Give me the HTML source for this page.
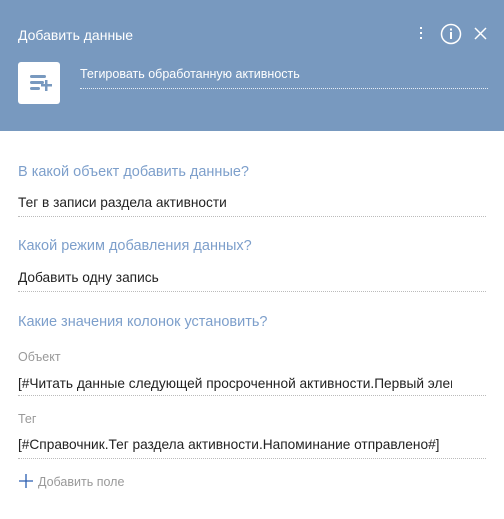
<!DOCTYPE html>
<html><head><meta charset="utf-8"><style>
*{margin:0;padding:0;box-sizing:border-box}
body{width:504px;height:519px;background:#fff;font-family:"Liberation Sans",sans-serif;position:relative;overflow:hidden}
.hdr{position:absolute;left:0;top:0;width:504px;height:131px;background:#7899bf}
.a{position:absolute;white-space:nowrap}
.q{color:#7d9fcb;font-size:14.5px}
.v{color:#222;font-size:13.7px}
.l{color:#999;font-size:12.5px}
.line{position:absolute;left:18px;width:468px;border-top:1px dotted #bbb;height:0}
</style></head><body>
<div class="hdr">
<div class="a" style="left:18px;top:27px;color:#fff;font-size:14px">Добавить данные</div>
<div class="a" style="left:420px;top:27px;width:3px">
<div style="width:2px;height:2px;background:#fff;margin-bottom:3px"></div>
<div style="width:2px;height:2px;background:#fff;margin-bottom:3px"></div>
<div style="width:2px;height:2px;background:#fff"></div></div>
<svg class="a" style="left:440px;top:23px" width="22" height="22" viewBox="0 0 22 22"><circle cx="11" cy="11" r="9.5" fill="none" stroke="#fff" stroke-width="1.5"/><rect x="10" y="9" width="2" height="7" fill="#fff"/><rect x="10" y="5.5" width="2" height="2" fill="#fff"/></svg>
<svg class="a" style="left:474px;top:27px" width="13" height="13" viewBox="0 0 13 13"><path d="M1 1L12 12M12 1L1 12" stroke="#fff" stroke-width="1.5"/></svg>
<div class="a" style="left:18px;top:62px;width:42px;height:42px;background:#fff;border-radius:3px"></div>
<svg class="a" style="left:29px;top:74px" width="24" height="18" viewBox="0 0 24 18"><g fill="#7899bf"><rect x="1" y="1" width="16" height="3" rx="1.5"/><rect x="1" y="7" width="14" height="3" rx="1.5"/><rect x="1" y="13" width="10" height="3" rx="1.5"/><rect x="16" y="6" width="2.5" height="11"/><rect x="12" y="10" width="11" height="2.5"/></g></svg>
<div class="a" style="left:80px;top:67px;color:#fff;font-size:12.5px">Тегировать обработанную активность</div>
<div class="a" style="left:80px;top:88px;width:408px;border-top:1px dotted #e8eef6"></div>
</div>
<div class="a q" style="left:18px;top:164px">В какой объект добавить данные?</div>
<div class="a v" style="left:18px;top:195px">Тег в записи раздела активности</div>
<div class="line" style="top:216px"></div>
<div class="a q" style="left:18px;top:238px">Какой режим добавления данных?</div>
<div class="a v" style="left:18px;top:270px">Добавить одну запись</div>
<div class="line" style="top:291px"></div>
<div class="a q" style="left:18px;top:314px">Какие значения колонок установить?</div>
<div class="a l" style="left:18px;top:350px">Объект</div>
<div class="a v" style="left:18px;top:376px;width:434px;overflow:hidden">[#Читать данные следующей просроченной активности.Первый элемент</div>
<div class="line" style="top:395px"></div>
<div class="a l" style="left:18px;top:412px">Тег</div>
<div class="a v" style="left:18px;top:437px">[#Справочник.Тег раздела активности.Напоминание отправлено#]</div>
<div class="line" style="top:458px"></div>
<svg class="a" style="left:19px;top:474px" width="14" height="14" viewBox="0 0 14 14"><path d="M7 0V14M0 7H14" stroke="#2a5db0" stroke-width="1.3"/></svg>
<div class="a" style="left:38px;top:475px;color:#999;font-size:12.5px">Добавить поле</div>
</body></html>
